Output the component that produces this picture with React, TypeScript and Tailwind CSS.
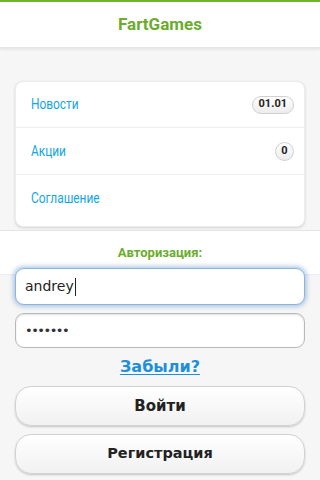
export default function App() {
  const font = { fontFamily: "Roboto, 'Noto Sans', sans-serif" };
  const dejavu = { fontFamily: "'DejaVu Sans', sans-serif" };
  return (
    <div className="w-[320px] h-[480px] overflow-hidden bg-[#f6f6f6] flex flex-col" style={font}>
      {/* шапка */}
      <div className="h-[2px] bg-[#6cb52d]" />
      <div className="h-[46px] bg-white flex items-center justify-center border-b border-[#e6e6e6] shadow-[0_2px_2px_rgba(0,0,0,0.06)]">
        <span className="text-[17px] font-bold text-[#6aad2c]">FartGames</span>
      </div>

      {/* меню */}
      <div className="pt-[33px] px-[15px] pb-[3px] border-b border-[#e4e4e4]">
        <div className="bg-white rounded-[8px] border border-[#ececec] shadow-[0_1px_3px_rgba(0,0,0,0.15)] flex flex-col">
          <div className="h-[46px] flex items-center justify-between pl-[15px] pr-[10px] border-b border-[#eeeeee]">
            <span className="inline-block text-[14px] text-[#12a6e4] scale-x-[0.85] origin-left">Новости</span>
            <span className="h-[18px] px-[6px] rounded-full border border-[#d0d0d0] bg-gradient-to-b from-white to-[#ececec] text-[11px] font-bold text-[#222] flex items-center">
              01.01
            </span>
          </div>
          <div className="h-[47px] flex items-center justify-between pl-[15px] pr-[10px] border-b border-[#eeeeee]">
            <span className="inline-block text-[14px] text-[#12a6e4] scale-x-[0.85] origin-left">Акции</span>
            <span className="w-[19px] h-[19px] rounded-full border border-[#d0d0d0] bg-gradient-to-b from-white to-[#ececec] text-[11px] font-bold text-[#222] flex items-center justify-center">
              0
            </span>
          </div>
          <div className="h-[51px] flex items-center pl-[15px] pb-[4px]">
            <span className="inline-block text-[14px] text-[#12a6e4] scale-x-[0.85] origin-left">Соглашение</span>
          </div>
        </div>
      </div>

      {/* авторизация */}
      <div className="h-[44px] bg-white flex items-center justify-center border-b border-[#ececec]">
        <span className="text-[13px] font-bold text-[#6aad2c]">Авторизация:</span>
      </div>

      <div className="-mt-[7px] px-[15px] flex flex-col">
        <div className="h-[37px] rounded-[9px] bg-white border border-[#8fb4d8] shadow-[0_0_4px_2px_rgba(120,165,215,0.55)] flex items-center px-[9px]">
          <span className="text-[14px] text-[#222]" style={dejavu}>andrey</span>
          <span className="w-[1px] h-[18px] bg-[#222] ml-[1px]" />
        </div>
        <div className="mt-[8px] h-[35px] rounded-[9px] bg-white border border-[#b8b8b8] shadow-[inset_0_1px_2px_rgba(0,0,0,0.12)] flex items-center px-[9px]">
          <span className="text-[13px] text-[#333] tracking-[-1.5px]" style={dejavu}>•••••••</span>
        </div>

        <div className="mt-[7px] flex justify-center">
          <span className="text-[16px] font-bold text-[#1d8fdb] underline underline-offset-[2px]" style={dejavu}>Забыли?</span>
        </div>

        <button className="mt-[7px] h-[40px] rounded-[16px] border border-[#d2d2d2] bg-gradient-to-b from-white to-[#f1f1f1] shadow-[0_1px_2px_rgba(0,0,0,0.2)] text-[15px] font-bold text-[#222]" style={dejavu}>
          Войти
        </button>
        <button className="mt-[8px] h-[40px] rounded-[16px] border border-[#d2d2d2] bg-gradient-to-b from-white to-[#f1f1f1] shadow-[0_1px_2px_rgba(0,0,0,0.2)] text-[14.5px] font-bold text-[#222]" style={dejavu}>
          Регистрация
        </button>
      </div>
    </div>
  );
}
